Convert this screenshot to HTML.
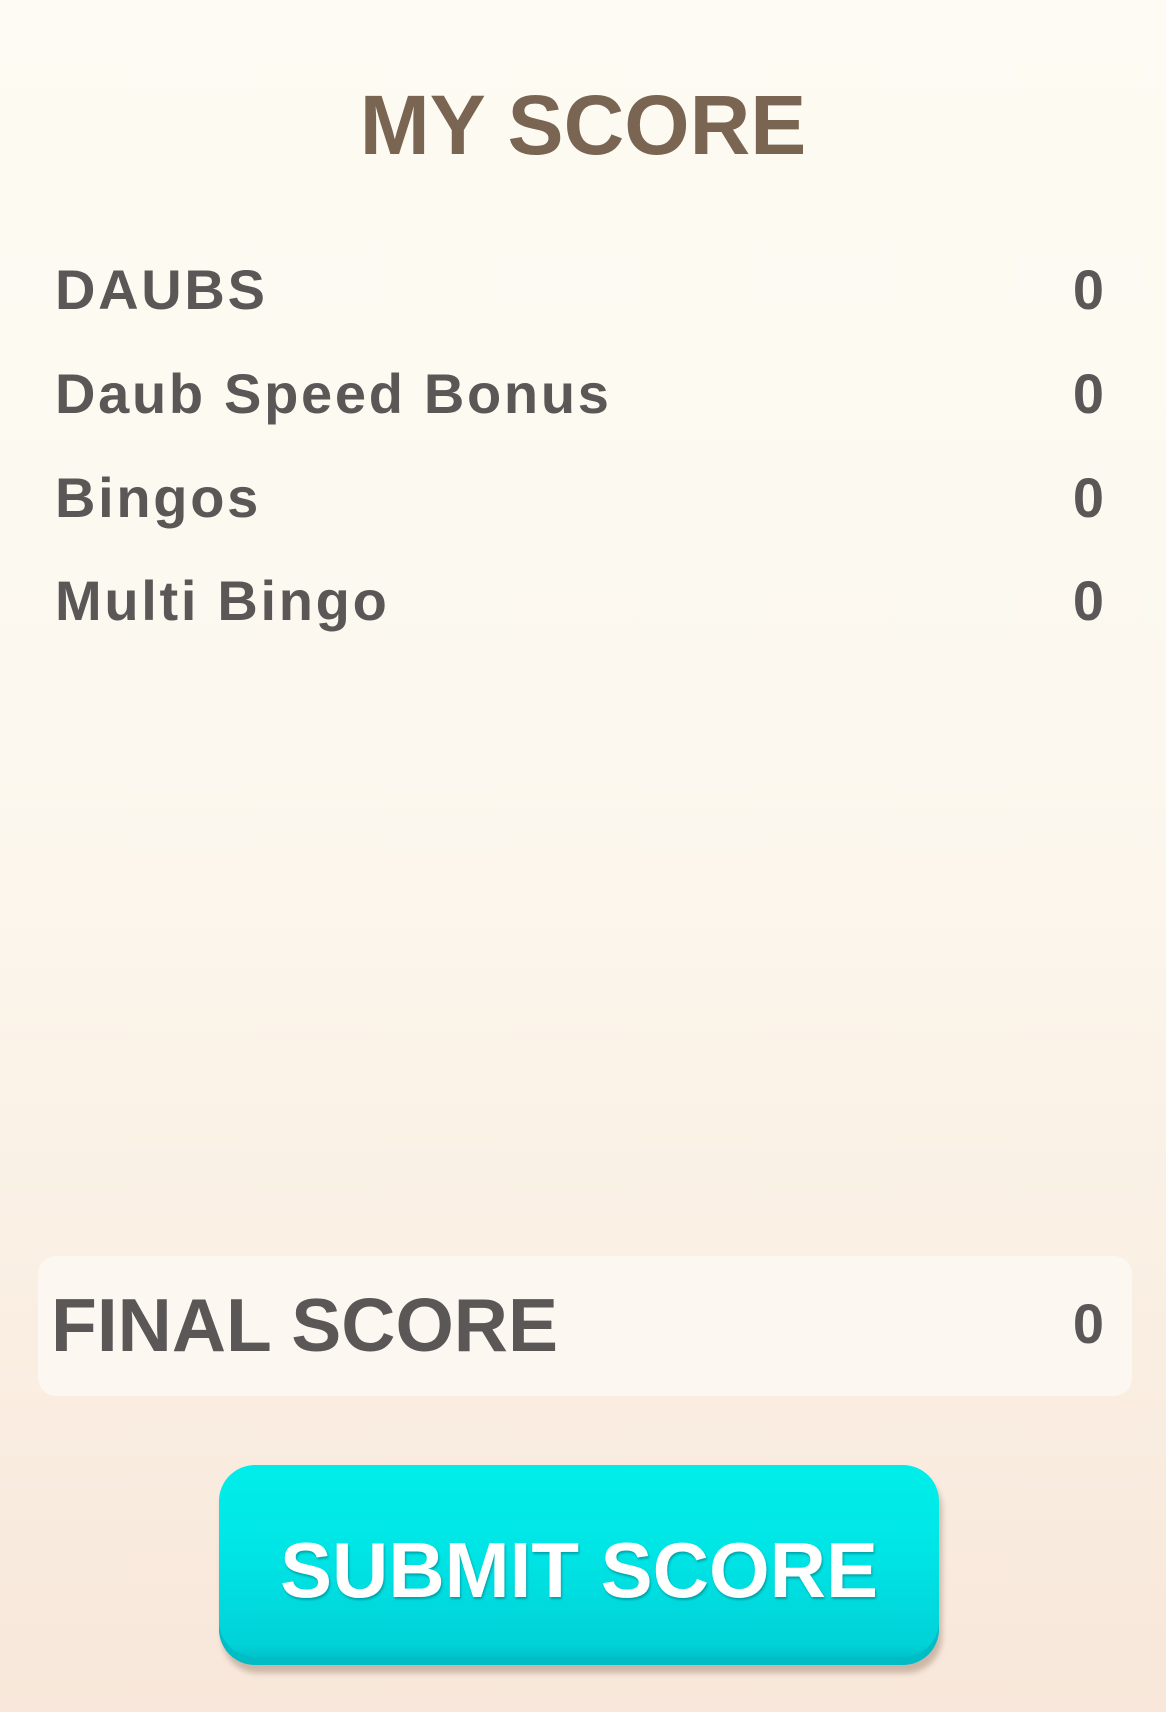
<!DOCTYPE html>
<html><head><meta charset="utf-8"><style>
html,body{margin:0;padding:0}
body{width:1166px;height:1712px;position:relative;overflow:hidden;
background:linear-gradient(to bottom,#fdfbf3 0%,#fcf8ef 45%,#faefe3 75%,#f8e7da 100%);
font-family:"Liberation Sans",sans-serif;font-weight:bold}
.t{position:absolute;white-space:nowrap;line-height:1}
#title{left:0;width:1166px;text-align:center;top:83px;font-size:84px;color:#7a6553}
.row{position:absolute;left:55px;right:62px;font-size:56px;color:#5b5757;line-height:1;letter-spacing:2.7px}
.row span{position:absolute;right:0;top:0;letter-spacing:0}
#box{position:absolute;left:38px;top:1256px;width:1094px;height:140px;background:#fcf7f1;border-radius:18px}
#btn{position:absolute;left:219px;top:1465px;width:720px;height:200px;border-radius:36px;
background:linear-gradient(to bottom,#00eeea 0%,#00e6e6 40%,#00d2d8 90%,#00b9c0 100%);
box-shadow:3px 8px 6px rgba(120,90,70,.35), inset 0 -8px 0 #00bcc4}
#btn div{position:absolute;left:0;width:100%;text-align:center;top:60px;font-size:78px;color:#fff;
text-shadow:1px 2px 2px rgba(0,100,110,.5)}
</style></head><body>
<div class="t" id="title">MY SCORE</div>
<div class="row" style="top:262px">DAUBS<span>0</span></div>
<div class="row" style="top:366px">Daub Speed Bonus<span>0</span></div>
<div class="row" style="top:470px">Bingos<span>0</span></div>
<div class="row" style="top:573px">Multi Bingo<span>0</span></div>
<div id="box"></div>
<div class="row" style="top:1288px;left:51px;font-size:75px;letter-spacing:0">FINAL SCORE<span style="font-size:56px;top:8px">0</span></div>
<div id="btn"><div>SUBMIT SCORE</div></div>
</body></html>
